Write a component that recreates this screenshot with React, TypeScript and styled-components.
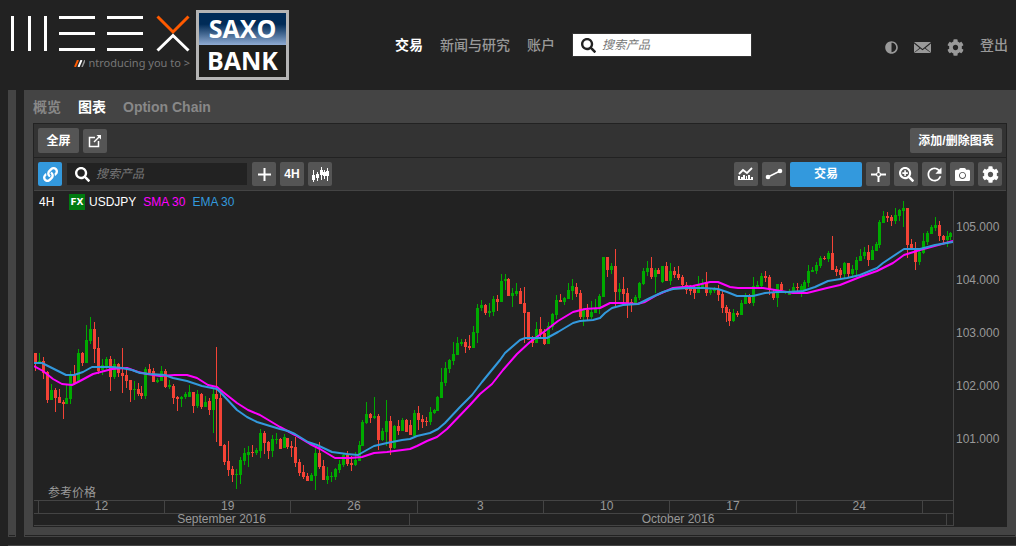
import React from 'react';
import styled, { createGlobalStyle } from 'styled-components';
import { FaAdjust, FaCamera, FaCog, FaLink, FaSearch, FaSearchPlus } from 'react-icons/fa';
import { MdRefresh } from 'react-icons/md';

const colors = {
  page: '#222222',
  panel: '#444444',
  bar: '#333333',
  button: '#555555',
  accent: '#3399dd',
  muted: '#999999',
  up: '#00aa00',
  down: '#f44336',
  sma: '#ff00ff',
};

const GlobalStyle = createGlobalStyle`
  * { box-sizing: border-box; }
  body {
    margin: 0;
    background: ${colors.page};
    color: #ffffff;
    font: 12px/16px "Liberation Sans", "Noto Sans CJK SC", sans-serif;
  }
  button, input { font: inherit; color: inherit; }
  svg { display: block; flex: none; }
`;

const Page = styled.div`
  display: flex;
  flex-direction: column;
  min-height: 100vh;
`;

const Header = styled.header`
  display: flex;
  height: 90px;
  padding: 10px 8px 0;
`;

const Logo = styled.a`
  display: flex;
  text-decoration: none;
`;

const Brand = styled.span`
  display: flex;
  flex-direction: column;
  width: 188px;
  padding: 5px 0 0 1px;
`;

const Tagline = styled.span`
  display: flex;
  align-items: center;
  gap: 3px;
  align-self: flex-end;
  padding-right: 6px;
  color: #777777;
  font: 11px/20px "Noto Sans", sans-serif;
  white-space: nowrap;
`;

const SaxoBox = styled.span`
  display: flex;
  flex-direction: column;
  width: 93px;
  height: 70px;
  border: 3px solid #b4b4b4;
  font: 700 25px/30px "Open Sans", sans-serif;
  text-align: center;
  color: #ffffff;
`;

const SaxoWord = styled.span<{ $dark?: boolean }>`
  height: 32px;
  background: ${(p) => (p.$dark ? '#1d1d1b' : 'linear-gradient(#002b57 35%, #8fabd2)')};
`;

const Nav = styled.nav`
  display: flex;
  gap: 17px;
  height: 70px;
  align-items: center;
  margin-left: 106px;
`;

const NavLink = styled.a<{ $active?: boolean }>`
  color: ${(p) => (p.$active ? '#ffffff' : colors.muted)};
  font-size: 14px;
  line-height: 20px;
  font-weight: ${(p) => (p.$active ? 700 : 500)};
  text-decoration: none;
  white-space: nowrap;
`;

const SearchBox = styled.label<{ $dark?: boolean }>`
  display: flex;
  align-items: center;
  gap: 6px;
  width: 180px;
  height: ${(p) => (p.$dark ? '22px' : '24px')};
  padding-left: 8px;
  border: ${(p) => (p.$dark ? '0' : '1px solid #333333')};
  background: ${(p) => (p.$dark ? colors.page : '#ffffff')};
  color: ${(p) => (p.$dark ? '#ffffff' : colors.page)};
`;

const SearchInput = styled.input`
  flex: 1;
  min-width: 0;
  height: 20px;
  padding: 0;
  border: 0;
  outline: 0;
  background: transparent;
  &::placeholder { color: #777777; font-style: italic; opacity: 1; }
`;

const UserMenu = styled.div`
  display: flex;
  align-items: center;
  gap: 16px;
  height: 70px;
  margin-left: auto;
  color: ${colors.muted};
`;

const PlainButton = styled.button`
  display: flex;
  padding: 4px 0 0;
  border: 0;
  background: none;
  color: inherit;
  cursor: pointer;
`;

const Workspace = styled.main`
  display: flex;
  gap: 8px;
  padding-left: 8px;
`;

const panelEdge = `
  background: linear-gradient(${colors.page}, ${colors.page}) 1px calc(100% - 1px) / calc(100% - 2px) 1px no-repeat, ${colors.panel};
`;

const SideStrip = styled.div`
  width: 8px;
  ${panelEdge}
`;

const Panel = styled.section`
  flex: 1;
  min-width: 0;
  padding: 0 9px 10px;
  ${panelEdge}
`;

const Tabs = styled.nav`
  display: flex;
  align-items: center;
  gap: 17px;
  height: 33px;
`;

const Tab = styled.a<{ $active?: boolean }>`
  color: ${(p) => (p.$active ? '#ffffff' : '#888888')};
  font-size: 14px;
  line-height: 20px;
  font-weight: 700;
  text-decoration: none;
`;

const Module = styled.div`
  border: 1px solid ${colors.page};
  border-bottom: 0;
  background: ${colors.page};
`;

const Toolbar = styled.div<{ $line: string }>`
  display: flex;
  align-items: center;
  gap: 4px;
  height: ${(p) => (p.$line === colors.page ? '34px' : '33px')};
  padding: 0 4px;
  border-bottom: 1px solid ${(p) => p.$line};
  background: ${colors.bar};
`;

const Group = styled.div<{ $end?: boolean }>`
  display: flex;
  align-items: center;
  gap: ${(p) => (p.$end ? '4px' : '5px')};
  margin-left: ${(p) => (p.$end ? 'auto' : '0')};
`;

const ToolButton = styled.button<{ $accent?: boolean; $width?: string }>`
  display: flex;
  align-items: center;
  justify-content: center;
  width: ${(p) => p.$width ?? '24px'};
  height: ${(p) => (p.$width ? '25px' : '24px')};
  padding: 0;
  border: 0;
  border-radius: 2px;
  background: ${(p) => (p.$accent ? colors.accent : colors.button)};
  color: #ffffff;
  font-weight: 700;
  white-space: nowrap;
  cursor: pointer;
`;

const ChartGrid = styled.div`
  display: grid;
  grid-template-columns: minmax(0, 1fr) 53px;
  padding-bottom: 1px;
`;

const Plot = styled.div`
  position: relative;
`;

const PlotSvg = styled.svg`
  width: 100%;
`;

const Legend = styled.div`
  position: absolute;
  top: 3px;
  left: 5px;
  display: flex;
  align-items: center;
`;

const Period = styled.span`
  width: 30px;
`;

const Badge = styled.span`
  width: 16px;
  margin-right: 4px;
  background: #007a10;
  font: 700 9px/16px "DejaVu Sans", sans-serif;
  text-align: center;
`;

const Series = styled.span<{ $color: string }>`
  margin-right: 7px;
  color: ${(p) => p.$color};
`;

const Note = styled.span`
  position: absolute;
  left: 14px;
  bottom: 0;
  color: ${colors.muted};
  line-height: 13px;
`;

const PriceAxis = styled.div`
  padding: 10px 0 0 2px;
  border-left: 1px solid ${colors.panel};
  color: ${colors.muted};
  line-height: 53px;
`;

const DateRow = styled.div<{ $columns: string }>`
  display: grid;
  grid-template-columns: ${(p) => p.$columns};
  height: 13px;
  border-top: 1px solid ${colors.panel};
  color: ${colors.muted};
  line-height: 11px;
  text-align: center;
  &:last-child { border-bottom: 1px solid ${colors.panel}; }
`;

const DateCell = styled.span`
  border-right: 1px solid ${colors.panel};
  &:last-child { border-right: 0; }
`;

const NextPanel = styled.div`
  flex: 1;
  min-height: 1px;
  margin: 8px 0 0 8px;
  background: ${colors.panel};
`;

/* One bar per entry: direction, high, body top, body bottom, low. */
const candleData = `
r353,353,363,371 g353,361,363,364 r357,361,373,379 r371,372,400,403 g384,390,400,400 r388,390,398,412
r389,397,403,403 r400,402,404,419 g385,398,404,404 g371,375,399,404 r365,375,383,385 g349,353,381,381
r352,353,363,366 g325,340,363,363 g317,329,341,344 r322,329,349,363 r337,348,371,374 g359,365,370,375
g357,359,367,369 r356,359,377,391 g359,364,377,379 r363,364,373,377 r348,373,376,393 r369,375,381,388
r380,380,390,402 g381,389,390,400 r383,389,394,396 r386,393,396,399 g367,369,396,399 r364,369,373,375
r368,371,382,382 g378,380,382,383 g366,371,381,381 r369,371,387,388 g380,385,387,389 r384,386,398,404
r396,397,399,411 g396,397,399,407 g392,394,397,399 g385,392,397,397 r392,392,406,413 g390,394,406,408
r393,394,407,409 g396,402,407,407 r398,401,410,415 g388,394,410,433 r347,394,399,442 r390,398,446,446
r444,445,462,465 r441,461,470,476 r466,469,475,482 g469,474,475,489 g457,460,475,484 g448,453,461,465
g446,452,455,467 r445,452,453,457 g448,450,453,455 g429,433,451,458 r431,433,443,454 r441,442,451,459
g435,439,451,457 g433,439,440,444 r438,439,449,449 g434,437,448,448 r438,438,447,449 r441,446,448,457
r437,447,463,467 r459,462,473,476 r465,472,477,479 r473,476,481,481 g473,475,481,481 g447,453,476,490
r442,453,467,469 r460,466,480,480 g467,476,480,484 g472,476,477,482 g468,469,477,480 g460,464,470,473
g453,455,465,467 r451,455,464,466 r456,463,465,471 g452,460,465,466 g441,445,461,461 g420,422,446,446
g402,414,423,424 r413,414,418,423 g397,416,418,419 r414,416,440,450 g428,431,440,441 g400,421,432,446
r416,421,448,455 g425,426,448,449 r420,426,431,435 g418,420,431,431 r419,420,432,432 r420,425,435,435
g410,413,436,436 r406,413,420,430 r415,419,422,428 r417,421,422,426 g407,412,422,425 g409,410,413,414
g396,397,411,411 g368,382,398,398 g362,368,383,386 g359,360,369,373 g342,354,361,365 g337,343,355,355
g339,342,344,346 r339,342,347,353 r335,346,348,350 g326,332,348,348 g304,308,333,343 g300,305,308,311
r304,305,313,315 g303,311,313,317 g296,299,312,316 r295,299,302,311 g274,281,302,302 g274,279,281,290
r278,279,296,296 g288,293,296,307 g283,291,294,296 r288,291,304,304 r287,303,313,343 r312,312,340,340
r336,337,343,347 g322,329,343,343 r317,329,334,338 r329,333,344,345 g322,326,344,344 g313,314,327,330
g295,300,315,319 r294,300,302,302 g297,298,302,305 g283,290,299,299 g279,286,291,300 r283,287,294,297
r290,293,317,319 g308,310,317,326 r304,310,317,320 g301,312,317,319 g299,308,313,313 g294,296,308,314
g257,257,297,297 r257,257,270,277 g263,266,270,274 r249,266,292,306 g283,289,292,300 r277,289,294,302
r288,293,304,318 r299,302,304,312 g295,297,303,305 g282,283,298,300 g268,271,284,285 g261,268,272,276
r257,268,277,279 g268,270,277,293 r268,270,274,274 g266,266,282,283 r262,266,281,281 g263,271,281,285
r267,271,275,278 r266,274,278,280 r275,277,285,287 r282,285,290,294 r285,289,291,295 r285,289,293,299
g276,285,293,293 g279,283,287,289 r272,282,293,296 g288,290,293,295 g287,289,291,293 r285,289,295,301
r291,294,308,313 r305,307,313,322 r309,312,321,326 g309,313,321,322 r311,313,315,317 g300,303,315,315
g293,296,304,304 r294,296,303,304 g277,286,303,306 g281,285,287,288 g273,276,286,287 r271,276,278,282
r275,277,290,295 r289,292,298,300 g284,284,298,307 r282,284,290,292 g291,292,293,294 g289,291,295,295
g283,287,293,294 r283,287,288,293 g284,286,290,297 g280,282,291,291 g265,271,283,287 g267,270,272,272
g262,265,271,274 g256,258,266,268 r256,258,259,260 g251,253,259,262 r236,253,270,270 r266,269,272,276
r268,270,275,279 g262,263,274,278 r263,263,274,278 g265,269,274,278 g257,260,270,277 g249,256,261,261
g247,252,256,259 r245,252,260,266 g246,250,260,260 g242,244,251,251 g220,222,245,248 g211,216,223,223
r212,216,218,222 r215,217,221,226 g208,215,221,224 g209,210,216,221 g201,208,211,227 r208,208,245,258
r239,244,249,249 r242,250,262,270 g250,252,262,265 g233,241,253,254 g231,233,242,245 g225,227,234,234
g217,225,228,231 r221,225,236,241 r235,236,240,243 g231,236,240,247 g232,233,237,240`;

const candles = candleData
  .trim()
  .split(/\s+/)
  .map((entry, index) => {
    const [high, top, bottom, low] = entry.slice(1).split(',').map(Number);
    return { x: Math.floor(35.41 + index * 3.9465), up: entry[0] === 'g', high, top, bottom, low };
  });

const emaPoints =
  '34,363 42,363 50,367 58,371 66,375 74,375 83,372 92,367 102,367 112,367 122,368 132,370 140,373 150,374 165,375 173,378 187,381 202,386 212,388 217,389 223,395 237,410 247,417 257,422 270,426 280,429 288,431 295,434 308,442 317,445 332,452 347,454 358,455 365,451 374,446 387,443 402,440 410,439 417,436 430,433 438,429 445,423 460,407 472,395 482,382 500,360 505,353 520,340 525,338 547,338 558,332 573,323 580,321 593,320 600,318 605,313 612,308 623,305 638,304 650,298 663,292 673,289 687,288 703,288 718,289 727,292 737,296 753,296 765,293 777,292 788,292 803,291 815,287 828,281 847,278 860,275 877,268 883,263 904,249 920,249 935,245 953,242';

const smaPoints =
  '34,366 43,371 53,379 62,384 72,385 80,381 93,374 112,369 127,368 138,372 147,374 160,376 175,375 187,375 197,378 208,385 217,387 223,392 237,403 248,410 260,415 270,421 280,427 295,435 310,444 320,449 335,458 350,458 362,457 374,453 387,452 410,449 417,446 427,441 437,437 447,429 470,405 480,394 492,384 503,370 517,354 530,342 545,331 558,321 573,312 585,309 600,308 610,303 623,303 637,304 645,302 657,295 673,288 693,286 710,282 718,282 730,287 738,288 763,288 775,290 793,293 807,293 827,288 840,285 860,277 877,271 893,263 904,255 920,250 953,241';

const Mark = () => (
  <svg width="181" height="38" viewBox="9 15 181 38" fill="#ffffff" aria-hidden="true">
    <path d="M11 16h3v35h-3zM28 16h3v35h-3zM44 16h3v35h-3z" />
    <path d="M59 16h36v3H59zM59 32h36v3H59zM59 48h36v3H59z" />
    <path d="M107 16h36v3h-36zM107 32h36v3h-36zM107 48h36v3h-36z" />
    <path d="M157.500 16.500L173 32l15.500-15.500" fill="none" stroke="#ff5a00" strokeWidth="3" />
    <path d="M157.500 50.500L173 35.500l15.500 15" fill="none" stroke="#ffffff" strokeWidth="3" />
  </svg>
);

const Slashes = () => (
  <svg width="11" height="7" viewBox="0 0 11 7" fill="none" strokeWidth="1.500" aria-hidden="true">
    <path d="M1 7L4 0" stroke="#ff5a00" strokeWidth="2" />
    <path d="M4.500 7l3-7" stroke="#ffffff" strokeWidth="2" />
    <path d="M8 7l3-7" stroke="#999999" />
  </svg>
);

const MailIcon = () => (
  <svg width="17" height="11" viewBox="0 0 17 11" fill="currentColor" aria-hidden="true">
    <path d="M0 0h17L8.500 7z" />
    <path d="M0 1.500l5.500 4.500L0 10.500zM17 1.500l-5.500 4.500 5.500 4.500zM0 11l6.200-4.500 2.300 1.800 2.300-1.800L17 11z" />
  </svg>
);

const PopOutIcon = () => (
  <svg width="14" height="14" viewBox="0 0 14 14" fill="none" stroke="currentColor" strokeWidth="1.500" aria-hidden="true">
    <path d="M7 3.500H1.500v9h9V7" />
    <path d="M6 8l5.500-5.500" />
    <path d="M8.500 1H13v4.500z" fill="currentColor" stroke="none" />
  </svg>
);

const PlusIcon = () => (
  <svg width="13" height="13" viewBox="0 0 13 13" fill="none" stroke="currentColor" strokeWidth="2" aria-hidden="true">
    <path d="M6.500 0v13M0 6.500h13" />
  </svg>
);

const BarsIcon = () => (
  <svg width="17" height="15" viewBox="0 0 17 15" fill="currentColor" aria-hidden="true">
    <path d="M1 3h1v12H1zM0 8h3v5H0zM5 5h1v9H5zM4 7h3v4H4zM9 0h1v13H9zM8 3h3v5H8zM12 3h1v9h-1zM11 5h3v4h-3zM15 1h1v13h-1zM14 4h3v5h-3z" />
  </svg>
);

const IndicatorIcon = () => (
  <svg width="16" height="14" viewBox="0 0 16 14" aria-hidden="true">
    <path d="M1 7l4-4 4 3 5-5" fill="none" stroke="currentColor" strokeWidth="1.800" />
    <path d="M0 9h2v4H0zM3 10h2v3H3zM5 8h2v5H5zM8 9h1v4H8zM10 8h2v5h-2zM13 10h2v3h-2zM0 12h15v1H0z" fill="currentColor" />
  </svg>
);

const TrendIcon = () => (
  <svg width="18" height="12" viewBox="0 0 18 12" fill="currentColor" aria-hidden="true">
    <path d="M3 9l12-6" stroke="currentColor" strokeWidth="1.500" />
    <circle cx="3" cy="9" r="2.300" />
    <circle cx="15" cy="3" r="2.300" />
  </svg>
);

const CrosshairIcon = () => (
  <svg width="15" height="15" viewBox="0 0 15 15" fill="none" stroke="currentColor" aria-hidden="true">
    <path d="M7.500 0v5.500M7.500 9.500V15M0 7.500h5.500M9.500 7.500H15" strokeWidth="2" />
    <circle cx="7.500" cy="7.500" r="2" strokeWidth="1.200" />
  </svg>
);

export default function App() {
  return (
    <Page>
      <GlobalStyle />
      <Header>
        <Logo href="#" aria-label="WEEX Saxo Bank">
          <Brand>
            <Mark />
            <Tagline>
              <Slashes />
              ntroducing you to &gt;
            </Tagline>
          </Brand>
          <SaxoBox>
            <SaxoWord>SAXO</SaxoWord>
            <SaxoWord $dark>BANK</SaxoWord>
          </SaxoBox>
        </Logo>
        <Nav>
          <NavLink href="#" $active>交易</NavLink>
          <NavLink href="#">新闻与研究</NavLink>
          <NavLink href="#">账户</NavLink>
          <SearchBox>
            <FaSearch size={15} />
            <SearchInput type="text" placeholder="搜索产品" aria-label="搜索产品" />
          </SearchBox>
        </Nav>
        <UserMenu>
          <PlainButton aria-label="主题"><FaAdjust size={13} /></PlainButton>
          <PlainButton aria-label="消息"><MailIcon /></PlainButton>
          <PlainButton aria-label="设置"><FaCog size={17} /></PlainButton>
          <NavLink href="#">登出</NavLink>
        </UserMenu>
      </Header>

      <Workspace>
        <SideStrip />
        <Panel>
          <Tabs>
            <Tab href="#">概览</Tab>
            <Tab href="#" $active>图表</Tab>
            <Tab href="#">Option Chain</Tab>
          </Tabs>
          <Module>
            <Toolbar $line={colors.page}>
              <ToolButton $width="41px">全屏</ToolButton>
              <ToolButton aria-label="弹出"><PopOutIcon /></ToolButton>
              <Group $end>
                <ToolButton $width="92px">添加/删除图表</ToolButton>
              </Group>
            </Toolbar>
            <Toolbar $line={colors.panel}>
              <Group>
                <ToolButton $accent aria-label="链接"><FaLink size={15} /></ToolButton>
                <SearchBox $dark>
                  <FaSearch size={15} />
                  <SearchInput type="text" placeholder="搜索产品" aria-label="搜索图表产品" />
                </SearchBox>
                <ToolButton aria-label="添加"><PlusIcon /></ToolButton>
              </Group>
              <ToolButton>4H</ToolButton>
              <ToolButton aria-label="图表类型"><BarsIcon /></ToolButton>
              <Group $end>
                <ToolButton aria-label="指标"><IndicatorIcon /></ToolButton>
                <ToolButton aria-label="趋势线"><TrendIcon /></ToolButton>
                <ToolButton $accent $width="72px">交易</ToolButton>
                <ToolButton aria-label="十字线"><CrosshairIcon /></ToolButton>
                <ToolButton aria-label="放大"><FaSearchPlus size={15} /></ToolButton>
                <ToolButton aria-label="刷新"><MdRefresh size={21} stroke="currentColor" /></ToolButton>
                <ToolButton aria-label="截图"><FaCamera size={15} /></ToolButton>
                <ToolButton aria-label="图表设置"><FaCog size={17} /></ToolButton>
              </Group>
            </Toolbar>
            <ChartGrid>
              <div>
                <Plot>
                  <PlotSvg viewBox="34 191 919 309" role="img" aria-label="USDJPY 4H">
                    <g shapeRendering="crispEdges">
                      {candles.map((c) => (
                        <g key={c.x} fill={c.up ? colors.up : colors.down}>
                          <rect x={c.x} y={c.high} width={1} height={c.low - c.high} />
                          <rect x={c.x - 1} y={c.top} width={3} height={c.bottom - c.top} />
                        </g>
                      ))}
                    </g>
                    <g fill="none" strokeWidth={2} strokeLinejoin="round">
                      <polyline points={smaPoints} stroke={colors.sma} />
                      <polyline points={emaPoints} stroke={colors.accent} />
                    </g>
                  </PlotSvg>
                  <Legend>
                    <Period>4H</Period>
                    <Badge>FX</Badge>
                    <Series $color="#ffffff">USDJPY</Series>
                    <Series $color={colors.sma}>SMA 30</Series>
                    <Series $color={colors.accent}>EMA 30</Series>
                  </Legend>
                  <Note>参考价格</Note>
                </Plot>
                <DateRow $columns="48fr repeat(7, 1263fr) 301fr">
                  <DateCell />
                  {['12', '19', '26', '3', '10', '17', '24'].map((day) => (
                    <DateCell key={day}>{day}</DateCell>
                  ))}
                  <DateCell />
                </DateRow>
                <DateRow $columns="376fr 537fr 6fr">
                  <DateCell>September 2016</DateCell>
                  <DateCell>October 2016</DateCell>
                  <DateCell />
                </DateRow>
              </div>
              <PriceAxis>
                {['105.000', '104.000', '103.000', '102.000', '101.000'].map((price) => (
                  <div key={price}>{price}</div>
                ))}
              </PriceAxis>
            </ChartGrid>
          </Module>
        </Panel>
      </Workspace>
      <NextPanel />
    </Page>
  );
}
